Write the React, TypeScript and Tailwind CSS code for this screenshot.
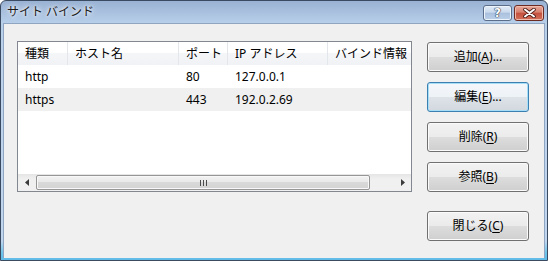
import React from 'react';

const font = { fontFamily: '"Noto Sans", "Noto Sans CJK JP", sans-serif' };

const columns = [
  { label: '種類', w: 'w-[50px]' },
  { label: 'ホスト名', w: 'w-[111px]' },
  { label: 'ポート', w: 'w-[49px]' },
  { label: 'IP アドレス', w: 'w-[100px]' },
  { label: 'バインド情報', w: 'w-[110px]' },
];

const rows = [
  ['http', '', '80', '127.0.0.1', ''],
  ['https', '', '443', '192.0.2.69', ''],
];

const DialogButton = ({ label, mnemonic, suffix = '', focused = false, className = '' }: { label: string; mnemonic: string; suffix?: string; focused?: boolean; className?: string }) => (
  <button
    className={`w-[102px] h-[30px] rounded-[3px] border text-[12px] text-black flex items-center justify-center leading-none ${
      focused
        ? 'border-[#3c7fb1] shadow-[inset_0_0_0_1px_#a6def8] bg-[linear-gradient(to_bottom,#f4f8fb_0%,#edf2f6_50%,#dde3e8_50%,#d2d8de_100%)]'
        : 'border-[#707070] shadow-[inset_0_0_0_1px_#fbfbfb] bg-[linear-gradient(to_bottom,#f2f2f2_0%,#ebebeb_50%,#dddddd_50%,#cfcfcf_100%)]'
    } ${className}`}
  >
    <span>
      {label}(<span className="underline underline-offset-2">{mnemonic}</span>){suffix}
    </span>
  </button>
);

export default function App() {
  return (
    <div className="w-[548px] h-[261px] bg-white" style={font}>
      <div className="w-full h-full flex flex-col border border-[#3a4a60] rounded-t-[6px] bg-[linear-gradient(to_bottom,#9ab2d3_0px,#b8cfea_22px,#bdd3ec_60px,#c0d6ee_240px,#6cc4ea_252px,#5cb8e6_261px)]">
        {/* Title bar */}
        <div className="h-[22px] flex items-start shrink-0">
          <div className="pl-[6px] pt-[4px] text-[12px] leading-[14px] text-[#1a1a1a] [text-shadow:0_0_6px_#ffffff,0_0_3px_#ffffff]">
            サイト バインド
          </div>
          <div className="ml-auto mr-[3px] mt-[4px] flex gap-[2px]">
            <div className="w-[29px] h-[16px] rounded-[3px] border border-[#5a6e8a] bg-[linear-gradient(to_bottom,#e4edf7_0%,#c9d9ec_45%,#a9c0dd_50%,#bcd0e8_100%)] shadow-[inset_0_0_0_1px_#eef4fb] flex items-center justify-center">
              <span className="text-[12px] font-bold leading-none text-white [text-shadow:0_0_1px_#26364d,0_0_1px_#26364d,0_0_1px_#26364d]" style={{ fontFamily: '"DejaVu Sans", sans-serif' }}>?</span>
            </div>
            <div className="w-[30px] h-[16px] rounded-[3px] border border-[#6b2a22] bg-[linear-gradient(to_bottom,#e9a99b_0%,#d7806e_45%,#c4503d_50%,#d2705a_100%)] shadow-[inset_0_0_0_1px_#f0bcae] flex items-center justify-center">
              <svg width="13" height="10" viewBox="0 0 13 10">
                <path d="M2 1.5 L11 8.5 M11 1.5 L2 8.5" stroke="#4a1a14" strokeWidth="3.6" strokeLinecap="round" />
                <path d="M2 1.5 L11 8.5 M11 1.5 L2 8.5" stroke="#ffffff" strokeWidth="2" strokeLinecap="round" />
              </svg>
            </div>
          </div>
        </div>

        {/* Client area */}
        <div className="flex-1 mx-[2px] mb-[2px] border-x border-t border-[#8fa5c2] bg-[#f0f0f0] flex items-start pl-[13px] pt-[17px]">
          {/* List view */}
          <div className="w-[395px] h-[151px] border border-[#828790] bg-white flex flex-col overflow-hidden">
            <div className="h-[23px] flex shrink-0 bg-[linear-gradient(to_bottom,#ffffff_0%,#ffffff_45%,#f5f6f8_50%,#f1f2f5_100%)]">
              {columns.map((c) => (
                <div key={c.label} className={`${c.w} shrink-0 h-full border-r border-[#e3e6ea] flex items-center pl-[7px] text-[12px] text-black whitespace-nowrap overflow-hidden`}>
                  {c.label}
                </div>
              ))}
            </div>
            {rows.map((r, i) => (
              <div key={i} className={`h-[23px] flex shrink-0 ${i === 1 ? 'bg-[#f0f0f0]' : 'bg-white'}`}>
                {r.map((cell, j) => (
                  <div key={j} className={`${columns[j].w} shrink-0 flex items-center pl-[7px] text-[12px] text-black whitespace-nowrap`}>
                    {cell}
                  </div>
                ))}
              </div>
            ))}
            <div className="flex-1" />
            {/* Horizontal scrollbar */}
            <div className="h-[17px] shrink-0 flex bg-[linear-gradient(to_bottom,#e5e5e5_0%,#f0f0f0_30%,#f0f0f0_100%)]">
              <div className="w-[17px] h-full flex items-center justify-center">
                <svg width="4" height="7" viewBox="0 0 4 7"><path d="M4 0 L0 3.5 L4 7 Z" fill="#3c3c3c" /></svg>
              </div>
              <div className="w-[335px] h-full py-[1px] pl-[1px]">
                <div className="w-full h-full rounded-[2px] border border-[#969696] shadow-[inset_0_0_0_1px_#f8f8f8] bg-[linear-gradient(to_bottom,#f3f3f3_0%,#e8e8e8_50%,#d9d9d9_50%,#d3d3d3_100%)] flex items-center justify-center gap-[2px]">
                  <div className="w-[1px] h-[6px] bg-[#4b4b4b]" />
                  <div className="w-[1px] h-[6px] bg-[#4b4b4b]" />
                  <div className="w-[1px] h-[6px] bg-[#4b4b4b]" />
                </div>
              </div>
              <div className="flex-1" />
              <div className="w-[17px] h-full flex items-center justify-center">
                <svg width="4" height="7" viewBox="0 0 4 7"><path d="M0 0 L4 3.5 L0 7 Z" fill="#3c3c3c" /></svg>
              </div>
            </div>
          </div>

          {/* Buttons */}
          <div className="ml-[15px] mt-[1px] flex flex-col gap-[10px]">
            <DialogButton label="追加" mnemonic="A" suffix="..." />
            <DialogButton label="編集" mnemonic="E" suffix="..." focused />
            <DialogButton label="削除" mnemonic="R" />
            <DialogButton label="参照" mnemonic="B" />
            <DialogButton label="閉じる" mnemonic="C" className="mt-[9px]" />
          </div>
        </div>
      </div>
    </div>
  );
}
